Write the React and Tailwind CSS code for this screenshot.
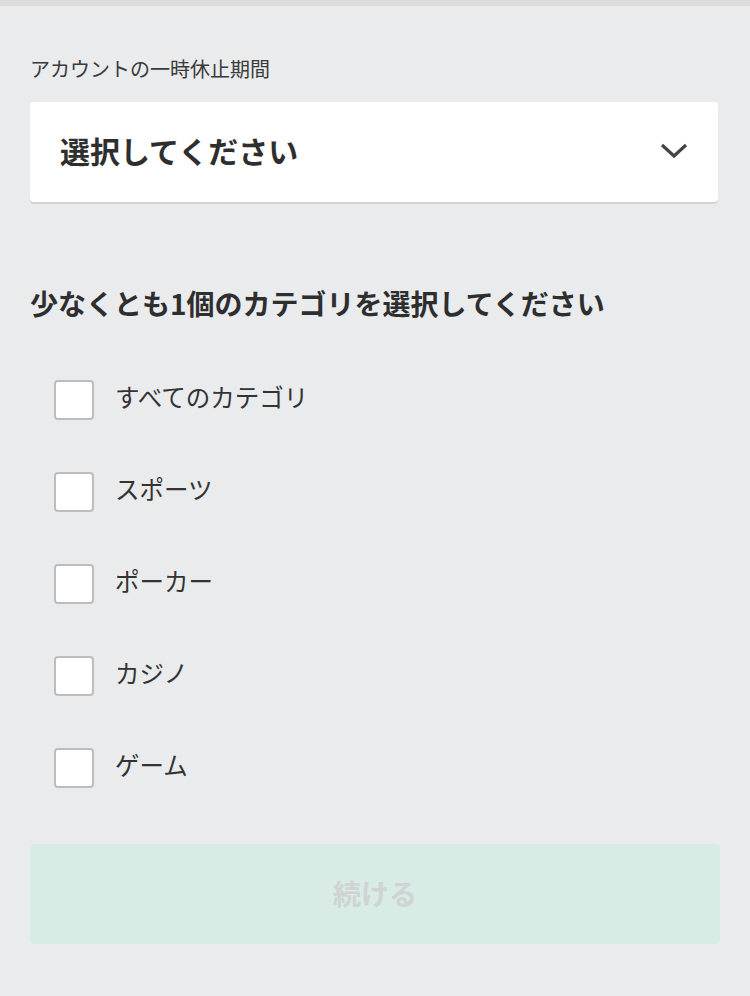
import React from "react";

const cats = ["すべてのカテゴリ", "スポーツ", "ポーカー", "カジノ", "ゲーム"];

export default function App() {
  return (
    <div
      className="w-[750px] h-[996px] bg-[#eaebed] text-[#333333]"
      style={{ fontFamily: '"Noto Sans CJK JP", "Noto Sans", sans-serif' }}
    >
      <div className="h-[6px] bg-[#dcdcdc]" />
      <div className="px-[30px]">
        <div className="pt-[49px] text-[20px] leading-[28px] text-[#3a3a3a]">アカウントの一時休止期間</div>
        <div className="mt-[19px] w-[688px] h-[100px] bg-white rounded-[4px] shadow-[0_2px_0_#d4d4d4] flex items-center justify-between pl-[30px] pr-[30px]">
          <span className="text-[30px] font-bold leading-none text-[#2e2e2e] pb-[5px]">選択してください</span>
          <svg width="28" height="18" viewBox="0 0 28 18" fill="none" className="mb-[2px]">
            <path d="M2 3 L14 14 L26 3" stroke="#444" strokeWidth="3.2" />
          </svg>
        </div>
        <div className="mt-[82px] text-[28px] font-bold leading-[38px] text-[#2e2e2e] pb-[1px]">
          少なくとも1個のカテゴリを選択してください
        </div>
        <div className="mt-[57px] flex flex-col gap-[52px] pl-[24px]">
          {cats.map((c) => (
            <label key={c} className="flex items-center gap-[21px] h-[40px]">
              <span className="w-[40px] h-[40px] bg-white border-2 border-[#bdbdbd] rounded-[4px] shrink-0" />
              <span className="text-[24.5px] leading-none text-[#333] pb-[5px]">{c}</span>
            </label>
          ))}
        </div>
        <button className="mt-[56px] w-[690px] h-[100px] rounded-[4px] bg-[#d8ebe5] text-[28px] font-bold text-[#cfd3d3] flex items-center justify-center pb-[2px]">
          続ける
        </button>
      </div>
    </div>
  );
}
